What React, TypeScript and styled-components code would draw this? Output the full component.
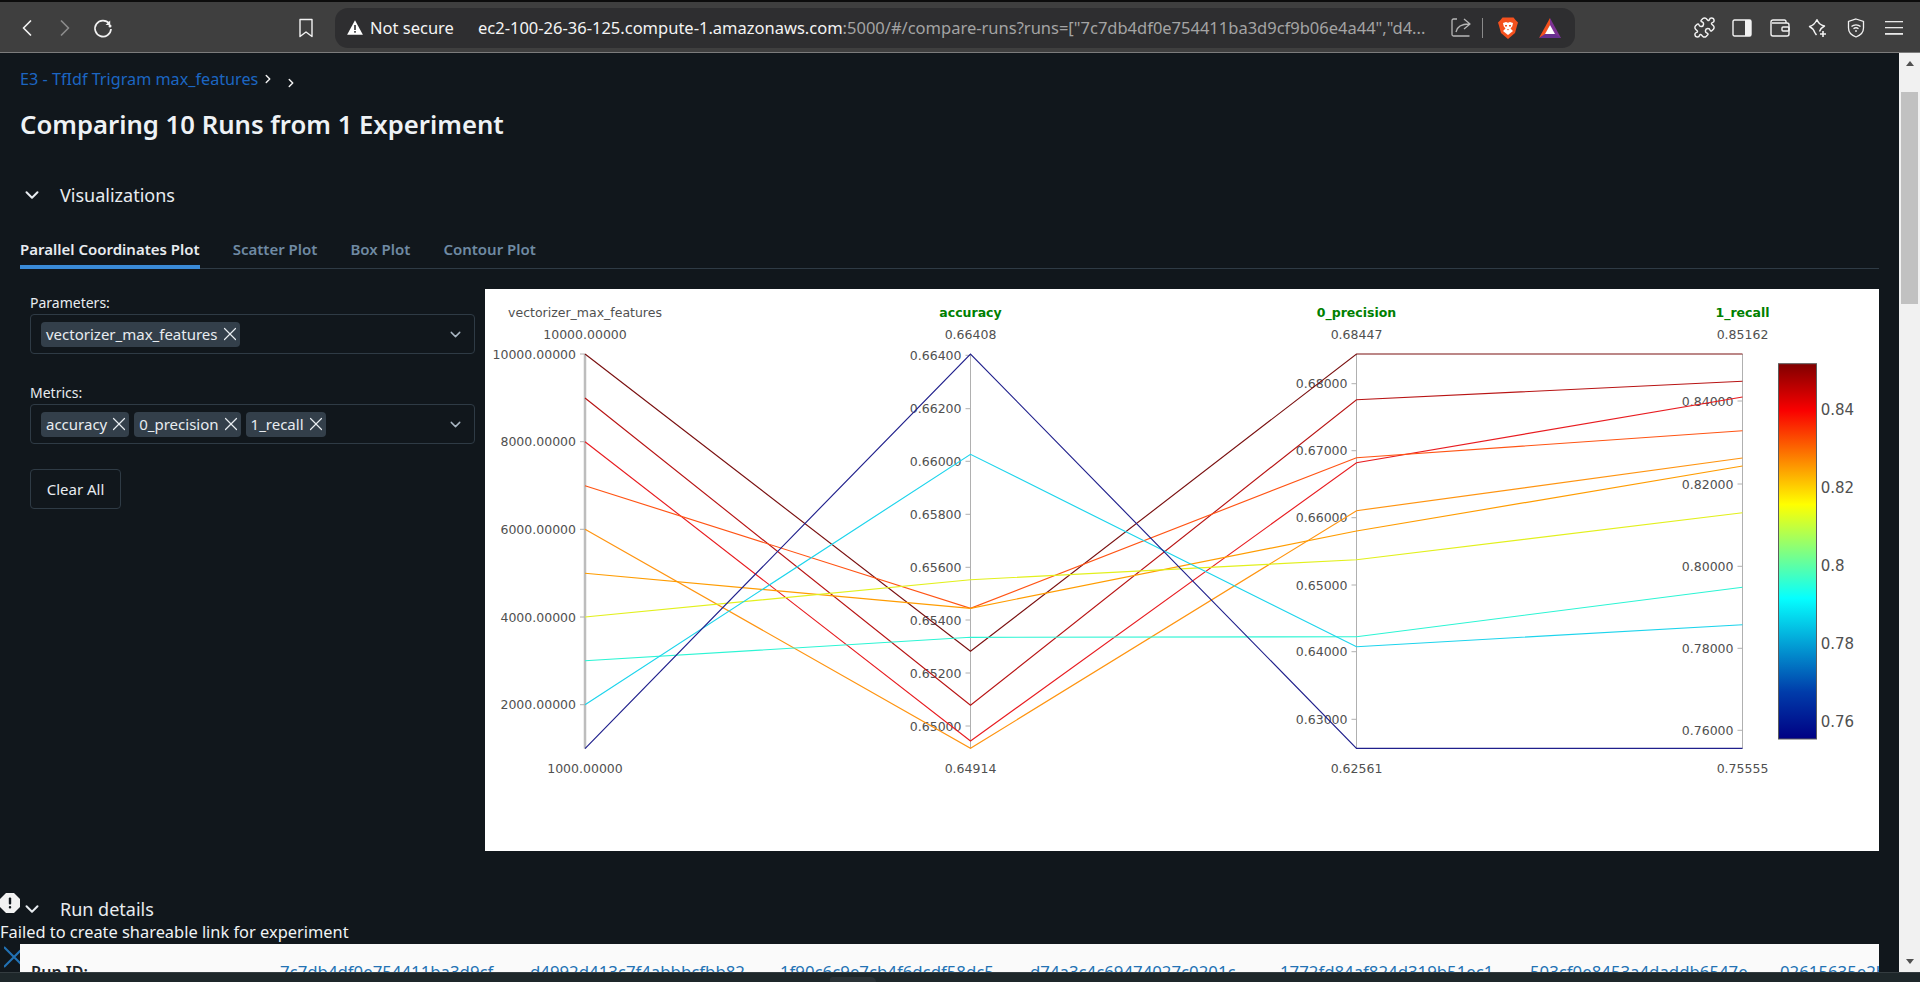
import styled, { createGlobalStyle } from 'styled-components';
import { ChevronDown, ChevronLeft, ChevronRight, Puzzle, X } from 'lucide-react';

const GlobalStyle = createGlobalStyle`
  html, body {
    margin: 0;
    height: 100%;
    overflow: hidden;
    background: #11171c;
  }
  * {
    box-sizing: border-box;
  }
`;

const Page = styled.div`
  position: relative;
  display: flex;
  flex-direction: column;
  width: 1920px;
  height: 982px;
  font-family: "Noto Sans", "Open Sans", sans-serif;
  color: #e8ecf0;
  overflow: hidden;
`;

const Toolbar = styled.header`
  display: flex;
  align-items: center;
  flex: none;
  height: 53px;
  padding: 2px 0 1px 8px;
  background: #3f3f3f;
  border-top: 2px solid #0c0c0c;
  border-bottom: 1px solid #7c7c7c;
`;

const IconSlot = styled.div<{ $left?: number; $color?: string }>`
  display: flex;
  align-items: center;
  justify-content: center;
  flex: none;
  width: 38px;
  height: 38px;
  margin-left: ${p => p.$left ?? 0}px;
  color: ${p => p.$color ?? '#f2f2f2'};
`;

const AddressBar = styled.div`
  display: flex;
  align-items: center;
  flex: none;
  width: 1240px;
  height: 40px;
  margin-left: 10px;
  padding: 0 14px 0 12px;
  border-radius: 13px;
  background: #2e2e30;
  font-family: "Noto Sans", sans-serif;
  font-size: 16.5px;
`;

const NotSecure = styled.span`
  flex: none;
  width: 108px;
  margin-left: 7px;
  color: #f4f4f4;
`;

const Url = styled.span`
  flex: 1;
  white-space: nowrap;
  color: #a4a4a4;
`;

const UrlHost = styled.span`
  color: #f4f4f4;
`;

const AddressActions = styled.div`
  display: flex;
  align-items: center;
  flex: none;
`;

const Separator = styled.div`
  width: 1px;
  height: 20px;
  margin: 0 15px 0 11px;
  background: #8a8a8a;
`;

const ActionLogo = styled.span<{ $left?: number }>`
  display: flex;
  margin-left: ${p => p.$left ?? 0}px;
`;

const Body = styled.div`
  display: flex;
  flex: 1;
  min-height: 0;
`;

const Content = styled.main`
  flex: 1;
  min-width: 0;
  padding: 0 20px;
  overflow: hidden;
`;

const Breadcrumbs = styled.nav`
  display: flex;
  align-items: center;
  height: 22px;
  margin-top: 15px;
  font-size: 16.2px;
  color: #1c66c2;
`;

const CrumbChevron = styled.span<{ $low?: boolean }>`
  display: flex;
  align-self: ${p => (p.$low ? 'flex-end' : 'center')};
  margin-left: ${p => (p.$low ? 9 : 3)}px;
  color: #f0f0f0;
`;

const Title = styled.h1`
  height: 32px;
  margin: 19px 0 0;
  font-size: 25.7px;
  line-height: 32px;
  font-weight: 600;
  color: #eef2f5;
`;

const SectionHeader = styled.div<{ $top: number }>`
  display: flex;
  align-items: center;
  height: 28px;
  margin-top: ${p => p.$top}px;
  font-size: 18px;
  color: #e8ecf0;
`;

const SectionChevron = styled.span`
  display: flex;
  justify-content: center;
  width: 24px;
  margin-right: 16px;
`;

const Tabs = styled.div`
  display: flex;
  gap: 33px;
  height: 29px;
  margin-top: 31px;
  border-bottom: 1px solid #2f3b45;
`;

const Tab = styled.div<{ $active?: boolean }>`
  height: 29px;
  font-size: 15px;
  line-height: 18px;
  font-weight: 600;
  color: ${p => (p.$active ? '#e8ecf0' : '#6f8aa3')};
  border-bottom: ${p => (p.$active ? '4px solid #3a8bd8' : 'none')};
`;

const Plotting = styled.section`
  display: grid;
  grid-template-columns: 465px 1394px;
  height: 562px;
  margin-top: 20px;
`;

const Controls = styled.div`
  display: flex;
  flex-direction: column;
  width: 445px;
  margin-left: 10px;
  padding-top: 4px;
`;

const FieldLabel = styled.label`
  height: 20px;
  margin-bottom: 1px;
  font-size: 14px;
  line-height: 20px;
  color: #e8ecf0;
`;

const Select = styled.div`
  display: flex;
  align-items: center;
  gap: 5px;
  height: 40px;
  margin-bottom: 29px;
  padding: 0 10px;
  border: 1px solid #2f3b45;
  border-radius: 4px;
`;

const SelectChevron = styled.span`
  display: flex;
  margin-left: auto;
  color: #a9b6c2;
`;

const Chip = styled.span`
  display: flex;
  align-items: center;
  height: 25px;
  padding: 0 3px 0 5px;
  border-radius: 4px;
  background: #333f4a;
  font-size: 15px;
  color: #e8ecf0;
  white-space: nowrap;
`;

const ChipClose = styled(X)`
  flex: none;
  margin: 0 -4px 0 1px;
`;

const ClearButton = styled.button`
  width: 91px;
  height: 40px;
  margin-top: -4px;
  padding: 0;
  border: 1px solid #2f3b45;
  border-radius: 4px;
  background: transparent;
  font-family: inherit;
  font-size: 15px;
  color: #e8ecf0;
`;

const ChartCard = styled.div`
  background: #ffffff;
`;

const RunTable = styled.div`
  display: flex;
  align-items: flex-start;
  height: 60px;
  margin-top: 21px;
  padding: 17px 0 0 11px;
  background: #fafafa;
  font-size: 16px;
  line-height: 22px;
  overflow: hidden;
`;

const RunLabel = styled.span`
  flex: none;
  width: 249px;
  color: #1f272d;
  font-weight: 600;
`;

const RunLink = styled.span`
  flex: none;
  width: 250px;
  padding-right: 35px;
  font-size: 16.8px;
  color: #2272b4;
  white-space: nowrap;
  overflow: hidden;
`;

const Scrollbar = styled.aside`
  display: flex;
  flex-direction: column;
  flex: none;
  width: 21px;
  background: #f1f1f1;
`;

const ScrollArrow = styled.div<{ $down?: boolean }>`
  display: flex;
  align-items: center;
  justify-content: center;
  flex: none;
  height: 21px;
  margin-top: ${p => (p.$down ? 'auto' : '0')};
  &::before {
    content: '';
    border-left: 4px solid transparent;
    border-right: 4px solid transparent;
    border-bottom: ${p => (p.$down ? '0' : '5px solid #505050')};
    border-top: ${p => (p.$down ? '5px solid #505050' : '0')};
  }
`;

const ScrollThumb = styled.div`
  flex: none;
  width: 17px;
  height: 212px;
  margin: 18px 0 0 2px;
  background: #c1c1c1;
`;

const Taskbar = styled.footer`
  display: flex;
  align-items: flex-end;
  flex: none;
  height: 10px;
  padding-left: 830px;
  background: #1e272a;
  border-top: 1px solid #343c40;
`;

const TaskbarPeek = styled.div`
  width: 46px;
  height: 5px;
  border-radius: 4px 8px 0 0;
  background: #2a3236;
`;

const Toast = styled.div`
  position: absolute;
  left: 0;
  top: 893px;
  width: 360px;
  font-size: 16.4px;
  line-height: 24px;
  color: #f0f3f5;
`;

const ToastIcon = styled.svg`
  display: block;
  width: 20px;
  height: 20px;
`;

const ToastMessage = styled.div`
  height: 24px;
  margin-top: 7px;
  white-space: nowrap;
`;

const ToastClose = styled.svg`
  display: block;
  width: 16px;
  height: 24px;
  margin: 0 0 0 4px;
`;

const AXIS_X = [100, 485.5, 871.5, 1257.5];

// y positions on each of the four axes, same order for every run
const RUNS = [
  { color: '#7a1010', ys: [65, 362.3, 65, 65] },
  { color: '#b81414', ys: [109, 416.3, 110.7, 92.3] },
  { color: '#e81c20', ys: [152.7, 452, 173.7, 108] },
  { color: '#ff5414', ys: [196.7, 319.3, 168.7, 141.7] },
  { color: '#ff9410', ys: [240.3, 459.3, 221.7, 169] },
  { color: '#ff9c00', ys: [284.3, 319.3, 242, 177] },
  { color: '#e2f01c', ys: [328, 290.7, 270.7, 223.7] },
  { color: '#2cf5d4', ys: [371.7, 348.3, 347.7, 298.3] },
  { color: '#1cd4ec', ys: [415.7, 165.3, 357.7, 335.7] },
  { color: '#20208c', ys: [459.7, 65, 459.3, 459.3] },
];

const AXES = [
  {
    name: 'vectorizer_max_features', top: '10000.00000', bottom: '1000.00000', metric: false,
    ticks: [['10000.00000', 65], ['8000.00000', 152.7], ['6000.00000', 240.3], ['4000.00000', 328], ['2000.00000', 415.7]],
  },
  {
    name: 'accuracy', top: '0.66408', bottom: '0.64914', metric: true,
    ticks: [['0.66400', 66.3], ['0.66200', 119.7], ['0.66000', 172.3], ['0.65800', 225.3], ['0.65600', 278.3], ['0.65400', 331], ['0.65200', 384], ['0.65000', 437]],
  },
  {
    name: '0_precision', top: '0.68447', bottom: '0.62561', metric: true,
    ticks: [['0.68000', 94.7], ['0.67000', 161.7], ['0.66000', 228.7], ['0.65000', 296], ['0.64000', 362.7], ['0.63000', 430.3]],
  },
  {
    name: '1_recall', top: '0.85162', bottom: '0.75555', metric: true,
    ticks: [['0.84000', 112], ['0.82000', 195], ['0.80000', 277.3], ['0.78000', 359.3], ['0.76000', 441.3]],
  },
] as const;

const COLORBAR_LABELS: [string, number][] = [['0.84', 120.7], ['0.82', 198.7], ['0.8', 276.7], ['0.78', 354.7], ['0.76', 432.7]];

const RUN_IDS = [
  '7c7db4df0e754411ba3d9cf',
  'd4992d413c7f4abbbcfbb82',
  '1f90c6c9e7cb4f6dcdf58dc5',
  'd74a3c4c69474027c0201c',
  '1772fd84af824d319b51ec1',
  '503cf0e8453a4daddb6547e',
  '02615635e2b94a01',
];

const ParallelPlot = () => (
  <svg width="1394" height="562" viewBox="0 0 1394 562" style={{ display: 'block' }} fontFamily="'DejaVu Sans', Verdana, sans-serif">
    <defs>
      <linearGradient id="jet" x1="0" y1="1" x2="0" y2="0">
        <stop offset="0" stopColor="rgb(0,0,131)" />
        <stop offset="0.125" stopColor="rgb(0,60,170)" />
        <stop offset="0.375" stopColor="rgb(5,255,255)" />
        <stop offset="0.625" stopColor="rgb(255,255,0)" />
        <stop offset="0.875" stopColor="rgb(250,0,0)" />
        <stop offset="1" stopColor="rgb(128,0,0)" />
      </linearGradient>
    </defs>
    {AXES.map((axis, i) => (
      <g key={axis.name}>
        <line x1={AXIS_X[i]} x2={AXIS_X[i]} y1={65} y2={459.5} stroke={i === 0 ? '#bdbdbd' : '#b0b0b0'} strokeWidth={i === 0 ? 2.5 : 1} />
        {axis.ticks.map(([label, y]) => (
          <g key={label}>
            <line x1={AXIS_X[i] - 5} x2={AXIS_X[i]} y1={y} y2={y} stroke="#b0b0b0" />
            <text x={AXIS_X[i] - 9} y={y + 4.5} fontSize="12.5" fill="#505050" textAnchor="end">{label}</text>
          </g>
        ))}
        <text x={AXIS_X[i]} y={27.8} fontSize="12.5" fontWeight={axis.metric ? 700 : 400} fill={axis.metric ? '#008000' : '#505050'} textAnchor="middle">{axis.name}</text>
        <text x={AXIS_X[i]} y={49.8} fontSize="12.5" fill="#505050" textAnchor="middle">{axis.top}</text>
        <text x={AXIS_X[i]} y={483.8} fontSize="12.5" fill="#505050" textAnchor="middle">{axis.bottom}</text>
      </g>
    ))}
    {RUNS.map(run => (
      <polyline
        key={run.color}
        points={run.ys.map((y, i) => `${AXIS_X[i]},${y}`).join(' ')}
        fill="none"
        stroke={run.color}
        strokeWidth="1.15"
      />
    ))}
    <rect x="1293.5" y="74.7" width="38" height="375.3" fill="url(#jet)" stroke="#5c5c5c" strokeWidth="1" />
    {COLORBAR_LABELS.map(([label, y]) => (
      <text key={label} x="1335.7" y={y + 5.5} fontSize="15" fill="#505050">{label}</text>
    ))}
  </svg>
);

const ReloadIcon = () => (
  <svg width="22" height="22" viewBox="0 0 22 22" fill="none" stroke="currentColor" strokeWidth="1.7">
    <path d="M17.2 6.5A8 8 0 1 0 19 12" />
    <path d="M18.2 3.5v4.6h-4.6z" fill="currentColor" stroke="none" />
    <circle cx="18" cy="9" r="1.5" fill="currentColor" stroke="none" />
  </svg>
);

const BookmarkIcon = () => (
  <svg width="16" height="20" viewBox="0 0 16 20" fill="none" stroke="currentColor" strokeWidth="1.4" strokeLinejoin="round">
    <path d="M2 1.5h12v17l-6-4.5-6 4.5z" />
  </svg>
);

const WarningIcon = () => (
  <svg width="16" height="15" viewBox="0 0 16 15" style={{ flex: 'none' }}>
    <path d="M8 0.3 15.9 14.7H0.1z" fill="#ffffff" />
    <rect x="7.2" y="5" width="1.6" height="5" fill="#2e2e30" />
    <rect x="7.2" y="11" width="1.6" height="1.7" fill="#2e2e30" />
  </svg>
);

const ShareIcon = () => (
  <svg width="20" height="20" viewBox="0 0 20 20" fill="none" stroke="#b6b6b6" strokeWidth="1.3">
    <path d="M6 2H2.5A1.5 1.5 0 0 0 1 3.5v14A1.5 1.5 0 0 0 2.5 19h16" transform="translate(0 -1)" />
    <path d="M5 14c1-5 5-8 13-8M13 1l6 5-6 5" strokeLinejoin="round" />
  </svg>
);

const BraveIcon = () => (
  <svg width="20" height="22" viewBox="0 0 20 22">
    <path d="M4.5 0.5h11L17.5 3 20 5.5l-1 3.2L17 16l-7 6-7-6L1 8.7 0 5.5 2.5 3z" fill="#f4511e" />
    <path d="M5 6l3-1 2 .8 2-.8 3 1-.7 3.2-1.8 2.3L15 14l-5 4-5-4 2.5-2.5-1.8-2.3z" fill="#ffffff" />
    <path d="M7 8h2v1.5H7zM11 8h2v1.5h-2zM9 12h2l-1 1.5z" fill="#f4511e" />
  </svg>
);

const BatIcon = () => (
  <svg width="22" height="20" viewBox="0 0 22 20">
    <path d="M11 0 22 20H16L11 11z" fill="#7d3294" />
    <path d="M11 0 0 20 6 17 11 7z" fill="#f4511e" />
    <path d="M0 20 6 16H16L22 20z" fill="#66308f" />
    <path d="M11 7 16 16H6z" fill="#ffffff" />
  </svg>
);

const SidebarIcon = () => (
  <svg width="20" height="18" viewBox="0 0 20 18">
    <rect x="1" y="1" width="18" height="16" rx="1.5" fill="none" stroke="#f2f2f2" strokeWidth="1.4" />
    <rect x="13" y="1" width="6" height="16" fill="#f2f2f2" />
  </svg>
);

const WalletIcon = () => (
  <svg width="20" height="18" viewBox="0 0 20 18" fill="none" stroke="#f2f2f2" strokeWidth="1.4">
    <path d="M16 4V2.5A1.5 1.5 0 0 0 14.5 1H3A2 2 0 0 0 1 3v12a2 2 0 0 0 2 2h14a2 2 0 0 0 2-2V6a2 2 0 0 0-2-2H2" />
    <rect x="12" y="8" width="7" height="4" rx="1" />
  </svg>
);

const LeoIcon = () => (
  <svg width="20" height="20" viewBox="0 0 20 20" fill="none" stroke="#f2f2f2" strokeWidth="1.4" strokeLinejoin="round">
    <path d="M9 1.5c1 3.5 2.5 5.5 7.5 6.5-3 1.5-4 2.5-5 5.5M7 15C6 12 4.5 10 1.5 8.5 5 7.5 7.5 5 9 1.5" />
    <path d="M7 15l1.5 2" />
    <path d="M15 13v6M12 16h6" strokeWidth="1.6" />
  </svg>
);

const ShieldIcon = () => (
  <svg width="18" height="20" viewBox="0 0 18 20" fill="none" stroke="#f2f2f2" strokeWidth="1.3">
    <path d="M9 1l7.5 2.5V10c0 4.5-3.5 7.5-7.5 9-4-1.5-7.5-4.5-7.5-9V3.5z" />
    <path d="M4.5 8.5c2.5-2.3 6.5-2.3 9 0M6.5 10.8c1.4-1.2 3.6-1.2 5 0" />
    <circle cx="9" cy="13" r="0.9" fill="#f2f2f2" stroke="none" />
  </svg>
);

const MenuIcon = () => (
  <svg width="18" height="16" viewBox="0 0 18 16" fill="#e8e8e8">
    <rect y="1" width="18" height="1.3" />
    <rect y="7" width="18" height="1.3" />
    <rect y="13" width="18" height="1.8" />
  </svg>
);

export default function App() {
  return (
    <Page>
      <GlobalStyle />
      <Toolbar>
        <IconSlot><ChevronLeft size={28} strokeWidth={1.5} /></IconSlot>
        <IconSlot $color="#8b8b8b"><ChevronRight size={28} strokeWidth={1.5} /></IconSlot>
        <IconSlot><ReloadIcon /></IconSlot>
        <IconSlot $left={165}><BookmarkIcon /></IconSlot>
        <AddressBar>
          <WarningIcon />
          <NotSecure>Not secure</NotSecure>
          <Url>
            <UrlHost>ec2-100-26-36-125.compute-1.amazonaws.com</UrlHost>
            :5000/#/compare-runs?runs=["7c7db4df0e754411ba3d9cf9b06e4a44","d4...
          </Url>
          <AddressActions>
            <ShareIcon />
            <Separator />
            <ActionLogo><BraveIcon /></ActionLogo>
            <ActionLogo $left={21}><BatIcon /></ActionLogo>
          </AddressActions>
        </AddressBar>
        <IconSlot $left={110}><Puzzle size={23} strokeWidth={1.5} /></IconSlot>
        <IconSlot><SidebarIcon /></IconSlot>
        <IconSlot><WalletIcon /></IconSlot>
        <IconSlot><LeoIcon /></IconSlot>
        <IconSlot><ShieldIcon /></IconSlot>
        <IconSlot><MenuIcon /></IconSlot>
      </Toolbar>
      <Body>
        <Content>
          <Breadcrumbs>
            E3 - TfIdf Trigram max_features
            <CrumbChevron><ChevronRight size={14} strokeWidth={2.5} /></CrumbChevron>
            <CrumbChevron $low><ChevronRight size={14} strokeWidth={2.5} /></CrumbChevron>
          </Breadcrumbs>
          <Title>Comparing 10 Runs from 1 Experiment</Title>
          <SectionHeader $top={40}>
            <SectionChevron><ChevronDown size={22} strokeWidth={2.2} /></SectionChevron>
            Visualizations
          </SectionHeader>
          <Tabs>
            <Tab $active>Parallel Coordinates Plot</Tab>
            <Tab>Scatter Plot</Tab>
            <Tab>Box Plot</Tab>
            <Tab>Contour Plot</Tab>
          </Tabs>
          <Plotting>
            <Controls>
              <FieldLabel>Parameters:</FieldLabel>
              <Select>
                <Chip>vectorizer_max_features<ChipClose size={22} strokeWidth={1.3} /></Chip>
                <SelectChevron><ChevronDown size={17} /></SelectChevron>
              </Select>
              <FieldLabel>Metrics:</FieldLabel>
              <Select>
                <Chip>accuracy<ChipClose size={22} strokeWidth={1.3} /></Chip>
                <Chip>0_precision<ChipClose size={22} strokeWidth={1.3} /></Chip>
                <Chip>1_recall<ChipClose size={22} strokeWidth={1.3} /></Chip>
                <SelectChevron><ChevronDown size={17} /></SelectChevron>
              </Select>
              <ClearButton>Clear All</ClearButton>
            </Controls>
            <ChartCard><ParallelPlot /></ChartCard>
          </Plotting>
          <SectionHeader $top={44}>
            <SectionChevron><ChevronDown size={22} strokeWidth={2.2} /></SectionChevron>
            Run details
          </SectionHeader>
          <RunTable>
            <RunLabel>Run ID:</RunLabel>
            {RUN_IDS.map(id => <RunLink key={id}>{id}</RunLink>)}
          </RunTable>
        </Content>
        <Scrollbar>
          <ScrollArrow />
          <ScrollThumb />
          <ScrollArrow $down />
        </Scrollbar>
      </Body>
      <Taskbar><TaskbarPeek /></Taskbar>
      <Toast>
        <ToastIcon viewBox="0 0 20 20">
          <path d="M6 0h8l6 6v8l-6 6H6l-6-6V6z" fill="#f2f2f2" />
          <rect x="8.8" y="4.5" width="2.4" height="7" rx="1" fill="#11171c" />
          <rect x="8.8" y="13" width="2.4" height="2.4" rx="1" fill="#11171c" />
        </ToastIcon>
        <ToastMessage>Failed to create shareable link for experiment</ToastMessage>
        <ToastClose viewBox="0 0 16 24">
          <path d="M0 3 20 23M20 3 0 23" stroke="#2272b4" strokeWidth="2" fill="none" />
        </ToastClose>
      </Toast>
    </Page>
  );
}
